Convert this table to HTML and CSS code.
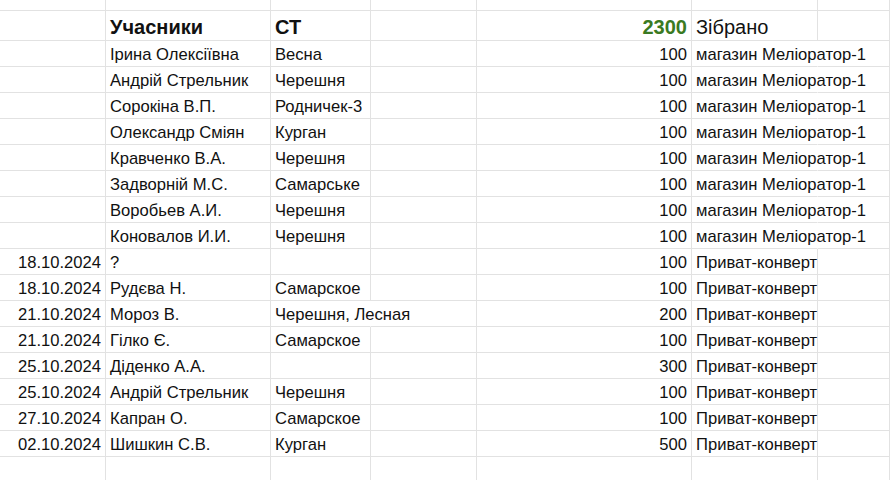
FILE: index.html
```html
<!DOCTYPE html>
<html lang="uk">
<head>
<meta charset="utf-8">
<title>Учасники</title>
<link rel="stylesheet" href="styles.css">
</head>
<body>
<div class="sheet">
  <div class="row top"><div class="c"></div><div class="c"></div><div class="c"></div><div class="c"></div><div class="c"></div><div class="c"></div><div class="c"></div></div>
  <div class="row head">
    <div class="c"></div>
    <div class="c b">Учасники</div>
    <div class="c b">СТ</div>
    <div class="c"></div>
    <div class="c num total">2300</div>
    <div class="c big">Зібрано</div>
    <div class="c"></div>
  </div>

  <div class="row"><div class="c num"></div><div class="c">Ірина Олексіївна</div><div class="c">Весна</div><div class="c"></div><div class="c num">100</div><div class="c spill">магазин Меліоратор-1</div><div class="c"></div></div>
  <div class="row"><div class="c num"></div><div class="c">Андрій Стрельник</div><div class="c">Черешня</div><div class="c"></div><div class="c num">100</div><div class="c spill">магазин Меліоратор-1</div><div class="c"></div></div>
  <div class="row"><div class="c num"></div><div class="c">Сорокіна В.П.</div><div class="c">Родничек-3</div><div class="c"></div><div class="c num">100</div><div class="c spill">магазин Меліоратор-1</div><div class="c"></div></div>
  <div class="row"><div class="c num"></div><div class="c">Олександр Сміян</div><div class="c">Курган</div><div class="c"></div><div class="c num">100</div><div class="c spill">магазин Меліоратор-1</div><div class="c"></div></div>
  <div class="row"><div class="c num"></div><div class="c">Кравченко В.А.</div><div class="c">Черешня</div><div class="c"></div><div class="c num">100</div><div class="c spill">магазин Меліоратор-1</div><div class="c"></div></div>
  <div class="row"><div class="c num"></div><div class="c">Задворній М.С.</div><div class="c">Самарське</div><div class="c"></div><div class="c num">100</div><div class="c spill">магазин Меліоратор-1</div><div class="c"></div></div>
  <div class="row"><div class="c num"></div><div class="c">Воробьев А.И.</div><div class="c">Черешня</div><div class="c"></div><div class="c num">100</div><div class="c spill">магазин Меліоратор-1</div><div class="c"></div></div>
  <div class="row"><div class="c num"></div><div class="c">Коновалов И.И.</div><div class="c">Черешня</div><div class="c"></div><div class="c num">100</div><div class="c spill">магазин Меліоратор-1</div><div class="c"></div></div>

  <div class="row"><div class="c num">18.10.2024</div><div class="c">?</div><div class="c"></div><div class="c"></div><div class="c num">100</div><div class="c">Приват-конверт</div><div class="c"></div></div>
  <div class="row"><div class="c num">18.10.2024</div><div class="c">Рудєва Н.</div><div class="c">Самарское</div><div class="c"></div><div class="c num">100</div><div class="c">Приват-конверт</div><div class="c"></div></div>
  <div class="row"><div class="c num">21.10.2024</div><div class="c">Мороз В.</div><div class="c spill">Черешня, Лесная</div><div class="c"></div><div class="c num">200</div><div class="c">Приват-конверт</div><div class="c"></div></div>
  <div class="row"><div class="c num">21.10.2024</div><div class="c">Гілко Є.</div><div class="c">Самарское</div><div class="c"></div><div class="c num">100</div><div class="c">Приват-конверт</div><div class="c"></div></div>
  <div class="row"><div class="c num">25.10.2024</div><div class="c">Діденко А.А.</div><div class="c"></div><div class="c"></div><div class="c num">300</div><div class="c">Приват-конверт</div><div class="c"></div></div>
  <div class="row"><div class="c num">25.10.2024</div><div class="c">Андрій Стрельник</div><div class="c">Черешня</div><div class="c"></div><div class="c num">100</div><div class="c">Приват-конверт</div><div class="c"></div></div>
  <div class="row"><div class="c num">27.10.2024</div><div class="c">Капран О.</div><div class="c">Самарское</div><div class="c"></div><div class="c num">100</div><div class="c">Приват-конверт</div><div class="c"></div></div>
  <div class="row"><div class="c num">02.10.2024</div><div class="c">Шишкин С.В.</div><div class="c">Курган</div><div class="c"></div><div class="c num">500</div><div class="c">Приват-конверт</div><div class="c"></div></div>

  <div class="row last"><div class="c"></div><div class="c"></div><div class="c"></div><div class="c"></div><div class="c"></div><div class="c"></div><div class="c"></div></div>
</div>
</body>
</html>
```

FILE: styles.css
```css
html, body {
  margin: 0;
  padding: 0;
  background: #fff;
}

body {
  width: 890px;
  height: 480px;
  overflow: hidden;
  font-family: "Liberation Sans", Arial, sans-serif;
  font-size: 16.6px;
  color: #111;
}

.sheet {
  display: flex;
  flex-direction: column;
}

.row {
  display: grid;
  grid-template-columns: 106px 165px 100px 106px 215px 126px 1fr;
  height: 26px;
}

.row.top { height: 11px; }
.row.head { height: 30px; }
.row.last { height: 24px; }

.c {
  box-sizing: border-box;
  border-right: 1px solid #e2e2e2;
  border-bottom: 1px solid #e2e2e2;
  padding: 0 4px 2px 4px;
  white-space: nowrap;
  overflow: visible;
  display: flex;
  align-items: flex-end;
  line-height: 19px;
  position: relative;
}

.row.head .c {
  padding-bottom: 3px;
}

.c.spill {
  border-right-color: transparent;
}

.c.num {
  justify-content: flex-end;
}

.c.b {
  font-weight: bold;
  font-size: 20px;
}

.c.big {
  font-size: 20px;
}

.c.total {
  font-weight: bold;
  font-size: 20px;
  color: #3a7a22;
}
```
